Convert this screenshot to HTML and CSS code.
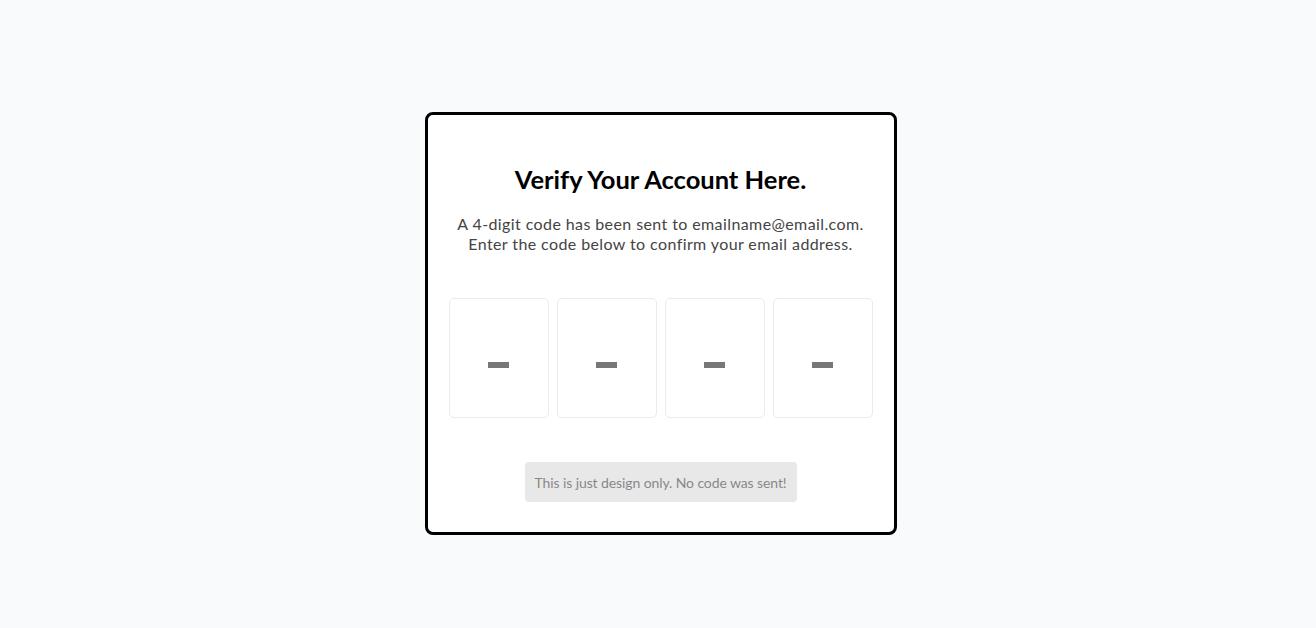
FILE: index.html
```html
<!DOCTYPE html>
<html>
<head>
<meta charset="utf-8">
<link rel="stylesheet" href="styles.css">
</head>
<body>
<div class="page">
  <div class="card">
    <h1 class="title">Verify Your Account Here.</h1>
    <p class="desc">A 4-digit code has been sent to emailname@email.com.<br>Enter the code below to confirm your email address.</p>
    <div class="codes">
      <div class="code"><span class="dash"></span></div>
      <div class="code"><span class="dash"></span></div>
      <div class="code"><span class="dash"></span></div>
      <div class="code"><span class="dash"></span></div>
    </div>
    <div class="note">This is just design only. No code was sent!</div>
  </div>
</div>
</body>
</html>
```
FILE: styles.css
```css
html, body {
  margin: 0;
  padding: 0;
  background: #f9fafc;
  font-family: "Lato", "Open Sans", sans-serif;
}
.page {
  display: flex;
  justify-content: center;
  padding-top: 112px;
  padding-left: 5px;
  height: 628px;
  box-sizing: border-box;
}
.card {
  width: 472px;
  height: 423px;
  box-sizing: border-box;
  border: 3px solid #000;
  border-radius: 8px;
  background: #fff;
  display: flex;
  flex-direction: column;
  align-items: center;
  padding-top: 46px;
}
.title {
  margin: 0;
  font-size: 25.5px;
  line-height: 36px;
  font-weight: 700;
  color: #000;
}
.desc {
  margin: 17px 0 0;
  font-size: 16px;
  line-height: 20px;
  letter-spacing: 0.4px;
  color: #444;
  text-align: center;
}
.codes {
  display: flex;
  gap: 8px;
  margin-top: 44px;
}
.code {
  width: 100px;
  height: 120px;
  box-sizing: border-box;
  border: 1px solid #ebebeb;
  border-radius: 5px;
  display: flex;
  align-items: center;
  justify-content: center;
}
.dash {
  display: block;
  width: 21px;
  height: 6px;
  background: #777;
  margin-top: 14px;
}
.note {
  margin-top: 44px;
  height: 40px;
  box-sizing: border-box;
  padding: 0 10px;
  display: flex;
  align-items: center;
  background: #e8e8e8;
  border-radius: 4px;
  color: #888;
  font-size: 14px;
  letter-spacing: -0.1px;
}
```
